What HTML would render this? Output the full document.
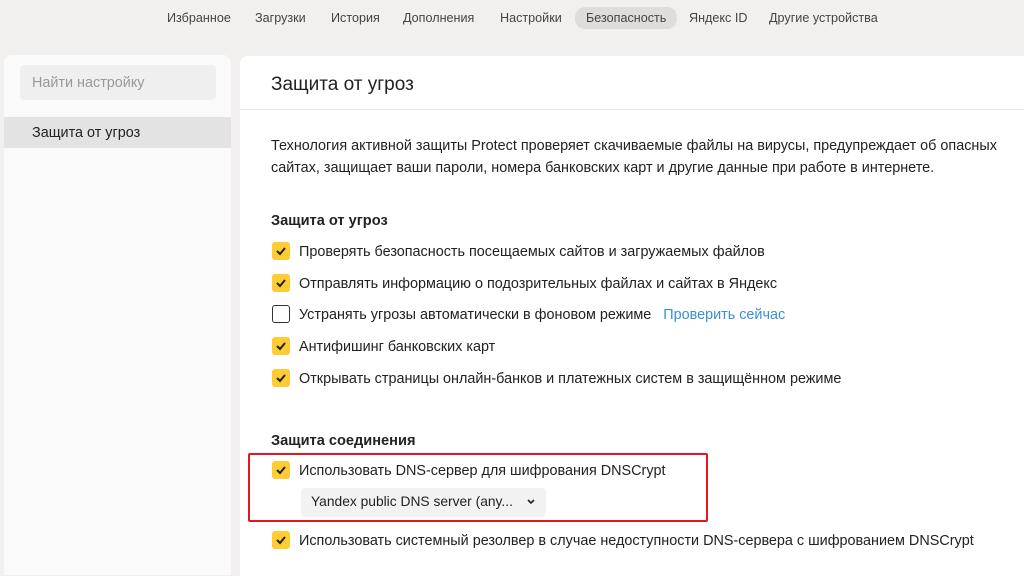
<!DOCTYPE html>
<html><head><meta charset="utf-8"><style>
*{margin:0;padding:0;box-sizing:border-box}
body{width:1024px;height:569px;overflow:hidden;background:#f1f0ee;font-family:"Liberation Sans","Noto Sans CJK SC",sans-serif;color:#222;position:relative;font-size:14.4px}
.a{position:absolute;white-space:nowrap}
.nav{top:11px;font-size:12.6px;color:#444}
.pill{background:#dedddb;border-radius:10px;padding:2px 11px;top:7px;left:575px;height:22px;line-height:18px}
.side{left:4px;top:55px;width:227px;height:520px;background:#fafafa;border-radius:8px 8px 0 0}
.main{left:240px;top:56px;width:790px;height:520px;background:#fff;border-radius:8px 0 0 0}
.cb{position:absolute;width:18px;height:18px;border-radius:3px;background:#fc3;left:272px}
.cb svg{position:absolute;left:3px;top:3px}
.cb.off{background:#fff;border:1.5px solid #333}
h3{position:absolute;font-size:14.6px;font-weight:bold;left:271px;white-space:nowrap}
.t{left:299px}
</style></head><body>
<div class="a nav" style="left:167px">Избранное</div>
<div class="a nav" style="left:255px">Загрузки</div>
<div class="a nav" style="left:331px">История</div>
<div class="a nav" style="left:403px">Дополнения</div>
<div class="a nav" style="left:500px">Настройки</div>
<div class="a nav pill">Безопасность</div>
<div class="a nav" style="left:689px">Яндекс ID</div>
<div class="a nav" style="left:769px">Другие устройства</div>
<div class="a side"></div>
<div class="a" style="left:20px;top:65px;width:196px;height:35px;background:#efefef;border-radius:4px"></div>
<div class="a" style="left:32px;top:75px;color:#999">Найти настройку</div>
<div class="a" style="left:4px;top:117px;width:227px;height:31px;background:#e3e3e3"></div>
<div class="a" style="left:32px;top:125px">Защита от угроз</div>
<div class="a main"></div>
<div class="a" style="left:271px;top:74px;font-size:19px">Защита от угроз</div>
<div class="a" style="left:240px;top:109px;width:784px;height:1px;background:#e5e5e5"></div>
<div class="a" style="left:271px;top:135px;line-height:22px">Технология активной защиты Protect проверяет скачиваемые файлы на вирусы, предупреждает об опасных<br>сайтах, защищает ваши пароли, номера банковских карт и другие данные при работе в интернете.</div>
<h3 style="top:213px">Защита от угроз</h3>
<div class="cb" style="top:242px"><svg width="12" height="12"><path d="M2 6l3 3 5-6" stroke="#222" stroke-width="2" fill="none"/></svg></div>
<div class="a t" style="top:244px">Проверять безопасность посещаемых сайтов и загружаемых файлов</div>
<div class="cb" style="top:274px"><svg width="12" height="12"><path d="M2 6l3 3 5-6" stroke="#222" stroke-width="2" fill="none"/></svg></div>
<div class="a t" style="top:276px">Отправлять информацию о подозрительных файлах и сайтах в Яндекс</div>
<div class="cb off" style="top:305px"></div>
<div class="a t" style="top:307px">Устранять угрозы автоматически в фоновом режиме&nbsp;&nbsp; <span style="color:#3a8fd6">Проверить сейчас</span></div>
<div class="cb" style="top:337px"><svg width="12" height="12"><path d="M2 6l3 3 5-6" stroke="#222" stroke-width="2" fill="none"/></svg></div>
<div class="a t" style="top:339px">Антифишинг банковских карт</div>
<div class="cb" style="top:369px"><svg width="12" height="12"><path d="M2 6l3 3 5-6" stroke="#222" stroke-width="2" fill="none"/></svg></div>
<div class="a t" style="top:371px">Открывать страницы онлайн-банков и платежных систем в защищённом режиме</div>
<h3 style="top:433px">Защита соединения</h3>
<div class="cb" style="top:461px"><svg width="12" height="12"><path d="M2 6l3 3 5-6" stroke="#222" stroke-width="2" fill="none"/></svg></div>
<div class="a t" style="top:463px">Использовать DNS-сервер для шифрования DNSCrypt</div>
<div class="a" style="left:301px;top:488px;width:245px;height:29px;background:#f2f2f2;border-radius:4px"></div>
<div class="a" style="left:311px;top:494px;font-size:13.8px">Yandex public DNS server (any...</div>
<svg class="a" style="left:527px;top:499px" width="8" height="6"><path d="M1 1l3 3 3-3" stroke="#222" stroke-width="1.6" fill="none"/></svg>
<div class="a" style="left:248px;top:453px;width:460px;height:69px;border:2.5px solid #e8141e;border-radius:2px"></div>
<div class="cb" style="top:531px"><svg width="12" height="12"><path d="M2 6l3 3 5-6" stroke="#222" stroke-width="2" fill="none"/></svg></div>
<div class="a t" style="top:533px">Использовать системный резолвер в случае недоступности DNS-сервера с шифрованием DNSCrypt</div>
</body></html>
